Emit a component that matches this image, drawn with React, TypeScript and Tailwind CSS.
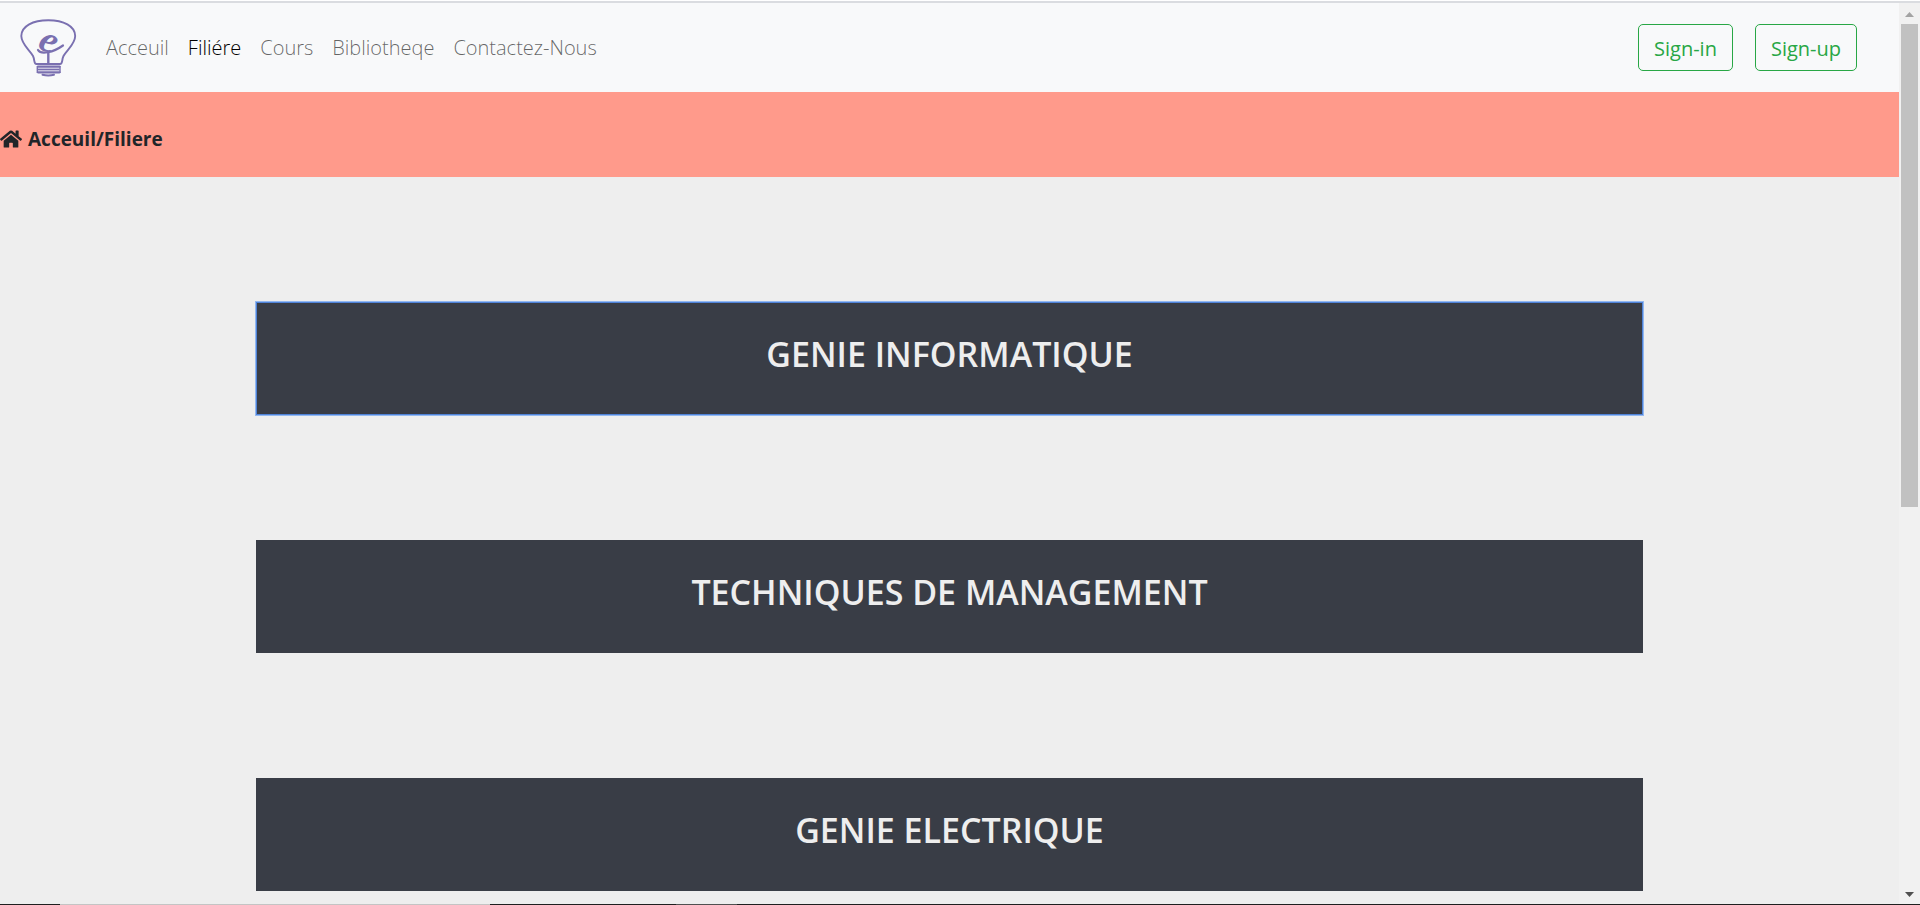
import { FaHome } from "react-icons/fa";

const links = [
  { label: "Acceuil", active: false },
  { label: "Filiére", active: true },
  { label: "Cours", active: false },
  { label: "Bibliotheqe", active: false },
  { label: "Contactez-Nous", active: false },
];

const programs = [
  { title: "GENIE INFORMATIQUE", focused: true },
  { title: "TECHNIQUES DE MANAGEMENT", focused: false },
  { title: "GENIE ELECTRIQUE", focused: false },
];

function BulbLogo() {
  return (
    <svg viewBox="0 0 60 60" className="size-15 overflow-visible" fill="none" stroke="#7a70b0" aria-hidden="true">
      <path
        d="M18.500 46C15.500 46 17 42 15 38C11.500 31.500 3.500 26.500 3.300 18C3.500 8 15 2.300 30.300 2.300S57 8 57.200 18C57 26.500 49 31.500 45.500 38C43.500 42 45 46 42 46Z"
        strokeWidth="1.900"
      />
      <path d="M30.300 34V46" strokeWidth="2.400" />
      <path d="M20 48.700H41.500M20 54.300H41.500" strokeWidth="2.200" strokeLinecap="round" />
      <path d="M20 51.500H41.500" strokeWidth="1.800" />
      <path d="M19.300 48V55M42 48V55" strokeWidth="1.400" />
      <path d="M24.500 56.800Q30.300 58.200 36 56.800" strokeWidth="2" strokeLinecap="round" />
      <text
        x="21"
        y="34"
        fontSize="38"
        fontStyle="italic"
        fontWeight="700"
        fontFamily="Liberation Serif, serif"
        fill="#7a70b0"
        stroke="none"
        transform="rotate(26 30 26)"
      >
        e
      </text>
      <path d="M20 32C23 37 35 34.500 45 27.500" strokeWidth="2.200" strokeLinecap="round" />
    </svg>
  );
}

function Scrollbar() {
  return (
    <div className="flex w-[21px] shrink-0 flex-col items-center bg-[#f1f1f1]" aria-hidden="true">
      <svg viewBox="0 0 17 21" className="h-[21px] w-[17px] shrink-0">
        <path d="M4 14H13L8.500 9Z" fill="#a3a3a3" />
      </svg>
      <div className="flex w-full grow flex-col items-center">
        <div className="h-[56%] w-[17px] bg-[#c1c1c1]" />
      </div>
      <svg viewBox="0 0 17 17" className="h-[17px] w-[17px] shrink-0">
        <path d="M4 5H13L8.500 10Z" fill="#505050" />
      </svg>
    </div>
  );
}

export default function App() {
  return (
    <div className="flex h-screen flex-col overflow-hidden bg-white pt-px font-['Open_Sans',sans-serif] text-[#212529]">
      <div className="h-0.5 shrink-0 bg-[#dadce0]" />
      <div className="flex min-h-0 grow">
        <div className="min-w-0 grow overflow-hidden bg-[#eee]">
          <header className="flex h-[89px] items-center justify-between bg-[#f8f9fa] pr-[42px] pl-[18px]">
            <div className="flex items-center">
              <a href="#" aria-label="Acceuil">
                <BulbLogo />
              </a>
              <nav className="ml-7 flex gap-[19px] text-xl font-light">
                {links.map((link) => (
                  <a
                    key={link.label}
                    href="#"
                    className={link.active ? "text-black" : "text-black/60"}
                  >
                    {link.label}
                  </a>
                ))}
              </nav>
            </div>
            <div className="flex gap-[22px]">
              <button className="h-[47px] w-[95px] rounded-[5px] border border-[#28a745] pt-0.5 text-xl text-[#28a745]">
                Sign-in
              </button>
              <button className="h-[47px] w-[102px] rounded-[5px] border border-[#28a745] pt-0.5 text-xl text-[#28a745]">
                Sign-up
              </button>
            </div>
          </header>
          <div className="flex h-[85px] items-center gap-1.5 bg-[#ff9a8b] pt-2 text-[19px] font-bold">
            <FaHome className="size-[22px]" />
            <span className="pt-0.5">Acceuil/Filiere</span>
          </div>
          <main className="flex flex-col gap-[125px] px-64 pt-[125px]">
            {programs.map((program) => (
              <button
                key={program.title}
                className={
                  program.focused
                    ? "h-[113px] bg-[#393d46] pb-2 text-[34px] font-semibold text-[#eee] inset-ring inset-ring-[#4f83d8] outline-1 outline-[#93b8f0]"
                    : "h-[113px] bg-[#393d46] pb-2 text-[34px] font-semibold text-[#eee]"
                }
              >
                {program.title}
              </button>
            ))}
          </main>
        </div>
        <Scrollbar />
      </div>
      <div className="flex h-px shrink-0 bg-[#1f1f1f]">
        <div className="ml-[3.1%] w-[22.4%] bg-[#c4c4c4]" />
        <div className="ml-[9.7%] w-[3.2%] bg-[#505050]" />
      </div>
    </div>
  );
}
